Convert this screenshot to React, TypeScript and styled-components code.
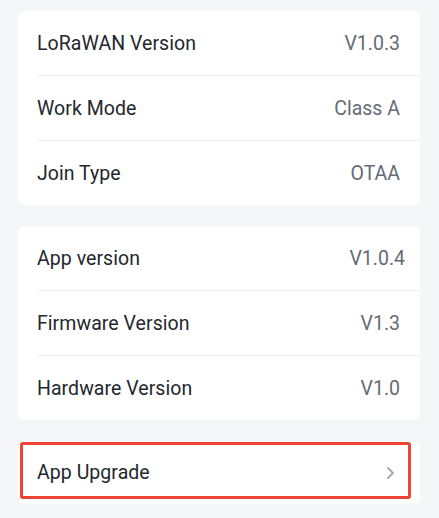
import React from "react";
import styled, { createGlobalStyle } from "styled-components";

const GlobalStyle = createGlobalStyle`
  html, body {
    margin: 0;
    padding: 0;
    background: #f5f6f8;
  }
  body {
    font-family: Roboto, "Noto Sans", sans-serif;
    -webkit-font-smoothing: antialiased;
  }
`;

const Page = styled.div`
  display: flex;
  flex-direction: column;
  gap: 21px;
  padding: 11px 19px 17px 18px;
  min-height: 518px;
  box-sizing: border-box;
`;

const Card = styled.div`
  position: relative;
  background: #ffffff;
  border-radius: 6px;
  padding-left: 19px;
`;

const Row = styled.div<{ $last?: boolean; $right?: number; $h?: number }>`
  display: flex;
  align-items: center;
  justify-content: space-between;
  height: ${(p) => p.$h || 64}px;
  padding-right: ${(p) => p.$right ?? 20}px;
  border-bottom: ${(p) => (p.$last ? "none" : "1px solid #eceef1")};
`;

const Label = styled.span`
  font-size: 19.5px;
  color: #23272e;
  letter-spacing: 0.05px;
`;

const Value = styled.span`
  font-size: 19.5px;
  color: #646b75;
`;

const Highlight = styled.div`
  position: absolute;
  left: 2px;
  top: 1px;
  right: 9px;
  bottom: 5px;
  border: 3px solid #ee4436;
  border-radius: 3px;
  pointer-events: none;
`;

const Chevron = () => (
  <svg width="9" height="14" viewBox="0 0 9 14" fill="none">
    <path d="M1.5 1.5 L7 7 L1.5 12.5" stroke="#a2a6ad" strokeWidth="1.8" />
  </svg>
);

type Item = { label: string; value: string; right?: number };

const loraItems: Item[] = [
  { label: "LoRaWAN Version", value: "V1.0.3" },
  { label: "Work Mode", value: "Class A" },
  { label: "Join Type", value: "OTAA" },
];

const versionItems: Item[] = [
  { label: "App version", value: "V1.0.4", right: 15 },
  { label: "Firmware Version", value: "V1.3" },
  { label: "Hardware Version", value: "V1.0" },
];

function InfoCard({ items }: { items: Item[] }) {
  return (
    <Card>
      {items.map((it, i) => (
        <Row key={it.label} $last={i === items.length - 1} $right={it.right}>
          <Label>{it.label}</Label>
          <Value>{it.value}</Value>
        </Row>
      ))}
    </Card>
  );
}

export default function App() {
  return (
    <>
      <GlobalStyle />
      <Page>
        <InfoCard items={loraItems} />
        <InfoCard items={versionItems} />
        <Card>
          <Row $last $h={63} $right={25}>
            <Label>App Upgrade</Label>
            <Chevron />
          </Row>
          <Highlight />
        </Card>
      </Page>
    </>
  );
}
